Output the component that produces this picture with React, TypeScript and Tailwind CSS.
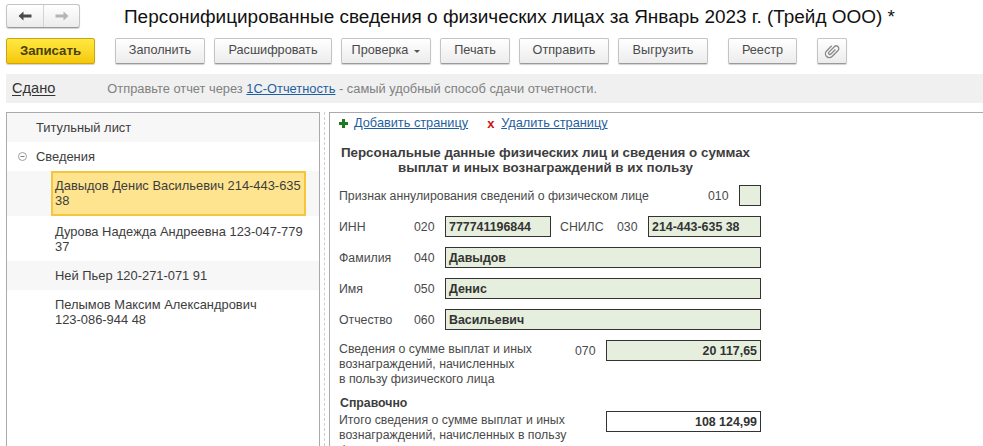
import React from "react";

const Btn = ({ w, ml = "", children }: { w: string; ml?: string; children: React.ReactNode }) => (
  <div className={`${w} ${ml} h-[26px] flex items-center justify-center rounded-[2px] border border-[#c4c4c4] border-b-[#9a9a9a] bg-gradient-to-b from-white to-[#ececec] text-[12.7px] text-[#4a4a4a] shadow-[0_1px_1px_rgba(0,0,0,0.18)]`}>
    {children}
  </div>
);

const Field = ({ w, ml = "", value, right = false, white = false }: { w: string; ml?: string; value: string; right?: boolean; white?: boolean }) => (
  <div className={`${w} ${ml} h-[21px] shrink-0 border border-[#333] flex items-center px-[3px] pt-[1px] text-[12.4px] font-bold text-[#333] ${right ? "justify-end" : ""} ${white ? "bg-white" : "bg-[#e6eedd]"}`}>
    {value}
  </div>
);

const Named = ({ label, code, value }: { label: string; code: string; value: string }) => (
  <div className="flex items-center h-[21px] mt-[10px]">
    <div className="w-[84px] pl-[9px] pt-[1px]">{label}</div>
    <div className="w-[31px] pt-[1px]">{code}</div>
    <Field w="w-[316px]" value={value} />
  </div>
);

export default function App() {
  return (
    <div className="w-[983px] h-[446px] overflow-hidden bg-white font-['Liberation_Sans',sans-serif] text-[#4a4a4a] text-[12.3px]">
      <div className="h-[34px] flex items-start pt-[4px] pl-[6px]">
        <div className="w-[74px] h-[24px] flex rounded-[3px] border border-[#c4c4c4] border-b-[#9a9a9a] bg-gradient-to-b from-white to-[#ececec] shadow-[0_1px_1px_rgba(0,0,0,0.18)]">
          <div className="w-[37px] flex items-center justify-center border-r border-[#d4d4d4]">
            <svg width="14" height="10" viewBox="0 0 14 10"><path d="M0.5 5 L5.5 0.5 V3.6 H13.5 V6.4 H5.5 V9.5 Z" fill="#4a4a4a" /></svg>
          </div>
          <div className="flex-1 flex items-center justify-center">
            <svg width="14" height="10" viewBox="0 0 14 10"><path d="M13.5 5 L8.5 0.5 V3.6 H0.5 V6.4 H8.5 V9.5 Z" fill="#b4b4b4" /></svg>
          </div>
        </div>
        <div className="ml-[44px] text-[18.97px] leading-[26px] text-[#111] whitespace-nowrap">Персонифицированные сведения о физических лицах за Январь 2023 г. (Трейд ООО) *</div>
      </div>

      <div className="h-[26px] mt-[4px] flex pl-[6px]">
        <div className="w-[89px] h-[26px] flex items-center justify-center rounded-[2px] border border-[#c9a418] bg-gradient-to-b from-[#ffe93f] to-[#f5c800] text-[13.2px] font-bold text-[#4a4209] shadow-[0_1px_1px_rgba(0,0,0,0.18)]">Записать</div>
        <Btn w="w-[90px]" ml="ml-[20px]">Заполнить</Btn>
        <Btn w="w-[118px]" ml="ml-[9px]">Расшифровать</Btn>
        <Btn w="w-[90px]" ml="ml-[9px]">
          Проверка
          <svg className="ml-[6px]" width="6" height="3" viewBox="0 0 6 3"><path d="M0 0 H6 L3 3 Z" fill="#555" /></svg>
        </Btn>
        <Btn w="w-[70px]" ml="ml-[9px]">Печать</Btn>
        <Btn w="w-[90px]" ml="ml-[9px]">Отправить</Btn>
        <Btn w="w-[90px]" ml="ml-[9px]">Выгрузить</Btn>
        <Btn w="w-[69px]" ml="ml-[20px]">Реестр</Btn>
        <Btn w="w-[30px]" ml="ml-[20px]">
          <svg width="16" height="16" viewBox="0 0 14 14" fill="none" stroke="#8a8a8a" strokeWidth="1.15">
            <g transform="rotate(45 7 7)">
              <path d="M3.6 4 V10.3 a3.4 3.4 0 0 0 6.8 0 V2.9 a2.3 2.3 0 0 0 -4.6 0 V9.6 a1.2 1.2 0 0 0 2.4 0 V4" />
            </g>
          </svg>
        </Btn>
      </div>

      <div className="h-[29px] mt-[10px] ml-[6px] bg-[#f0f0f0] flex items-center">
        <span className="ml-[6px] text-[14.6px] text-[#333] underline underline-offset-2">Сдано</span>
        <span className="ml-[52px] text-[12.85px] text-[#808080]">
          Отправьте отчет через <span className="text-[#1f5f9f] underline">1С-Отчетность</span> - самый удобный способ сдачи отчетности.
        </span>
      </div>

      <div className="flex mt-[9px] h-[334px]">
        <div className="ml-[6px] w-[314px] border border-[#aaaaaa] border-b-0 text-[#3d3d3d] text-[12.9px]">
          <div className="h-[29px] bg-[#f7f7f7] flex items-center pl-[29px]">Титульный лист</div>
          <div className="h-[29px] flex items-center">
            <svg className="ml-[11px] mr-[9px]" width="9" height="9" viewBox="0 0 9 9" fill="none">
              <circle cx="4.5" cy="4.5" r="4" stroke="#a0a0a0" />
              <path d="M2.5 4.5 H6.5" stroke="#808080" />
            </svg>
            Сведения
          </div>
          <div className="h-[45px] bg-[#f7f7f7] pl-[44px]">
            <div className="w-[255px] h-[45px] bg-[#fee48e] border-2 border-[#f4c63e] pl-[2px] pt-[5px] leading-[15px]">
              Давыдов Денис Васильевич 214-443-635 38
            </div>
          </div>
          <div className="h-[45px] pl-[48px] pt-[8px] pr-[12px] leading-[15px]">Дурова Надежда Андреевна 123-047-779 37</div>
          <div className="h-[29px] bg-[#f7f7f7] pl-[48px] flex items-center">Ней Пьер 120-271-071 91</div>
          <div className="h-[45px] pl-[48px] pt-[7px] leading-[15px] w-[270px]">Пелымов Максим Александрович 123-086-944 48</div>
        </div>

        <div className="w-[9px] relative">
          <div className="ml-[4px] h-full border-l border-dashed border-[#d0d0d0]" />
        </div>

        <div className="flex-1 border-l border-t border-[#aaaaaa] text-[#4a4a4a]">
          <div className="h-[20px] flex items-center pl-[9px] text-[12.75px]">
            <svg width="9" height="9" viewBox="0 0 9 9"><path d="M3 0 H6 V3 H9 V6 H6 V9 H3 V6 H0 V3 H3 Z" fill="#1f7a1f" /></svg>
            <span className="ml-[6px] text-[#1f5f9f] underline">Добавить страницу</span>
            <span className="ml-[19px] w-[7px] text-[#cc1111] font-bold text-[13px] leading-none">x</span>
            <span className="ml-[7px] text-[#1f5f9f] underline">Удалить страницу</span>
          </div>
          <div className="w-[431px] mt-[12px] text-center font-bold text-[13.35px] leading-[15px] text-[#3d3d3d] whitespace-nowrap">
            Персональные данные физических лиц и сведения о суммах
            <br />
            выплат и иных вознаграждений в их пользу
          </div>

          <div className="flex items-center h-[21px] mt-[10px]">
            <div className="w-[378px] pl-[9px] pt-[1px]">Признак аннулирования сведений о физическом лице</div>
            <div className="w-[31px] pt-[1px]">010</div>
            <Field w="w-[22px]" value="" />
          </div>

          <div className="flex items-center h-[21px] mt-[10px]">
            <div className="w-[84px] pl-[9px] pt-[1px]">ИНН</div>
            <div className="w-[31px] pt-[1px]">020</div>
            <Field w="w-[106px]" value="777741196844" />
            <div className="w-[66px] pl-[9px] pt-[1px]">СНИЛС</div>
            <div className="w-[31px] pt-[1px]">030</div>
            <Field w="w-[113px]" value="214-443-635 38" />
          </div>

          <Named label="Фамилия" code="040" value="Давыдов" />
          <Named label="Имя" code="050" value="Денис" />
          <Named label="Отчество" code="060" value="Васильевич" />

          <div className="flex items-start mt-[10px] pl-[9px]">
            <div className="w-[236px] leading-[15px] mt-[2px]">
              Сведения о сумме выплат и иных
              <br />
              вознаграждений, начисленных
              <br />
              в пользу физического лица
            </div>
            <div className="w-[31px] h-[21px] flex items-center pt-[1px]">070</div>
            <Field w="w-[155px]" value="20 117,65" right />
          </div>

          <div className="pl-[10px] mt-[9px] font-bold leading-[15px] text-[#3d3d3d]">Справочно</div>
          <div className="flex items-start pl-[9px]">
            <div className="w-[267px] leading-[15px] pt-[2px]">
              Итого сведения о сумме выплат и иных
              <br />
              вознаграждений, начисленных в пользу
              <br />
              физического лица
            </div>
            <Field w="w-[155px]" value="108 124,99" right white />
          </div>
        </div>
      </div>
    </div>
  );
}
